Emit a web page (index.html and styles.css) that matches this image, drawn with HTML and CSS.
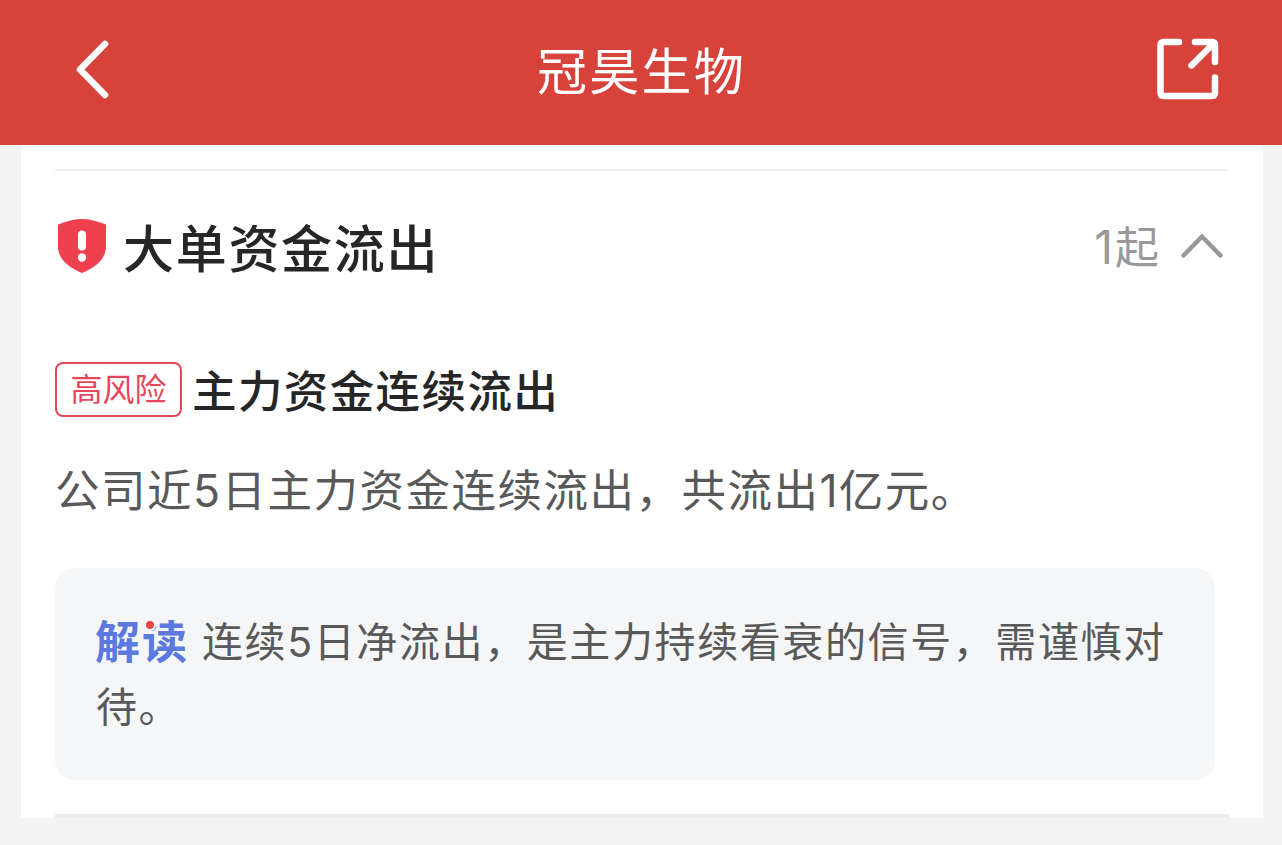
FILE: index.html
```html
<!DOCTYPE html>
<html lang="zh-CN">
<head>
    <meta charset="UTF-8">
    <meta name="viewport" content="width=device-width, initial-scale=1.0">
    <title>冠昊生物</title>
    <link rel="stylesheet" href="styles.css">
</head>
<body>
    <header class="navbar">
        <svg class="back-icon" width="36" height="60" viewBox="0 0 36 60">
            <path d="M31 4 L6 29.5 L31 55" />
        </svg>
        <h1 class="navbar-title">冠昊生物</h1>
        <svg class="share-icon" width="64" height="64" viewBox="0 0 64 64">
            <path d="M23 4 H8 Q4.5 4 4.5 7.5 V54.5 Q4.5 58 8 58 H55.5 Q59 58 59 54.5 V39.5" />
            <path d="M39 4 H56 Q59 4 59 7 V24" />
            <path d="M35.5 27.5 L57 6" />
        </svg>
    </header>

    <main class="card">
        <section class="risk">
            <div class="risk-header">
                <svg class="shield-icon" width="48" height="55" viewBox="0 0 48 55">
                    <path fill="#ee404f" d="M24 0 C31 0 39 2 48 5.5 V27 C48 40 38 48 24 54 C10 48 0 40 0 27 V5.5 C9 2 17 0 24 0 Z" />
                    <rect x="20" y="11.5" width="8" height="20" rx="4" fill="#fff" />
                    <circle cx="24" cy="38.5" r="4.2" fill="#fff" />
                </svg>
                <h2 class="risk-title">大单资金流出</h2>
                <span class="risk-count"><span class="count-num">1</span>起</span>
                <svg class="arrow-icon" width="42" height="26" viewBox="0 0 42 26">
                    <path d="M2.5 22.5 L21 3.5 L39.5 22.5" />
                </svg>
            </div>

            <div class="event-header">
                <span class="tag">高风险</span>
                <h3 class="event-title">主力资金连续流出</h3>
            </div>
            <p class="event-desc">公司近5日主力资金连续流出，共流出<span class="one">1</span>亿元。</p>

            <div class="analysis"><span class="analysis-logo">解读</span>连续5日净流出，是主力持续看衰的信号，需谨慎对待。</div>
        </section>
    </main>
</body>
</html>
```

FILE: styles.css
```css
* {
    margin: 0;
    padding: 0;
    box-sizing: border-box;
}

body {
    font-family: Inter, "Noto Sans CJK SC", sans-serif;
    background: #f4f4f4;
    color: #262626;
}

svg {
    display: block;
    flex: none;
}

.navbar {
    display: flex;
    align-items: center;
    justify-content: space-between;
    height: 145px;
    padding: 0 62px 6px 74px;
    background: #d7433b;
}

.back-icon,
.share-icon,
.arrow-icon {
    fill: none;
    stroke: #fff;
    stroke-width: 6.5;
    stroke-linecap: round;
    stroke-linejoin: round;
}

.navbar-title {
    color: #fff;
    font-size: 50px;
    font-weight: 400;
    line-height: 72px;
    letter-spacing: 2.2px;
    padding: 4px 0 0 17px;
}

.card {
    height: 673px;
    margin: 0 19px 0 21px;
    padding: 24px 34px 0;
    background: #fff;
}

.risk {
    height: 649px;
    border-top: 2px solid #f1f1f1;
    border-bottom: 4px solid #ebebeb;
}

.risk-header {
    display: flex;
    align-items: center;
    height: 80px;
    margin-top: 35px;
    padding: 0 6px 0 3px;
}

.risk-title {
    flex: 1;
    margin-left: 17px;
    font-size: 51px;
    font-weight: 500;
    letter-spacing: 1.7px;
}

.risk-count {
    margin: -2px 22px 0 0;
    color: #999;
    font-size: 44px;
}

.count-num {
    letter-spacing: 2px;
    font-size: 46px;
}

.arrow-icon {
    stroke: #999;
    stroke-width: 4.5;
}

.event-header {
    display: flex;
    align-items: center;
    height: 55px;
    margin-top: 76px;
}

.tag {
    width: 127px;
    height: 55px;
    border: 2px solid #e5475a;
    border-radius: 8px;
    color: #e5475a;
    font-size: 32px;
    line-height: 52px;
    text-align: center;
}

.event-title {
    margin: -2px 0 0 10px;
    font-size: 44.5px;
    font-weight: 500;
    letter-spacing: 1.4px;
}

.event-desc {
    margin-top: 41px;
    color: #595959;
    font-size: 44.5px;
    line-height: 66px;
    letter-spacing: 1.5px;
}

.one {
    letter-spacing: 1px;
}

.analysis {
    width: 1160px;
    height: 212px;
    margin-top: 44px;
    padding: 42px 30px 40px 41px;
    background: #f4f6f8;
    border-radius: 20px;
    color: #595959;
    font-size: 41px;
    line-height: 65px;
    letter-spacing: 1.6px;
}

.analysis-logo {
    display: inline-block;
    position: relative;
    top: 2px;
    margin: 0 13px 0 -1px;
    color: #5b79df;
    font-size: 45px;
    font-weight: 700;
    line-height: 50px;
    letter-spacing: 2px;
}

/* red dot over the first stroke of the second character */
.analysis-logo::after {
    content: "";
    position: absolute;
    top: 3px;
    left: 51px;
    width: 8px;
    height: 8px;
    border-radius: 50%;
    background: #e5483e;
    box-shadow: 0 0 0 2px #f4f6f8;
}
```
